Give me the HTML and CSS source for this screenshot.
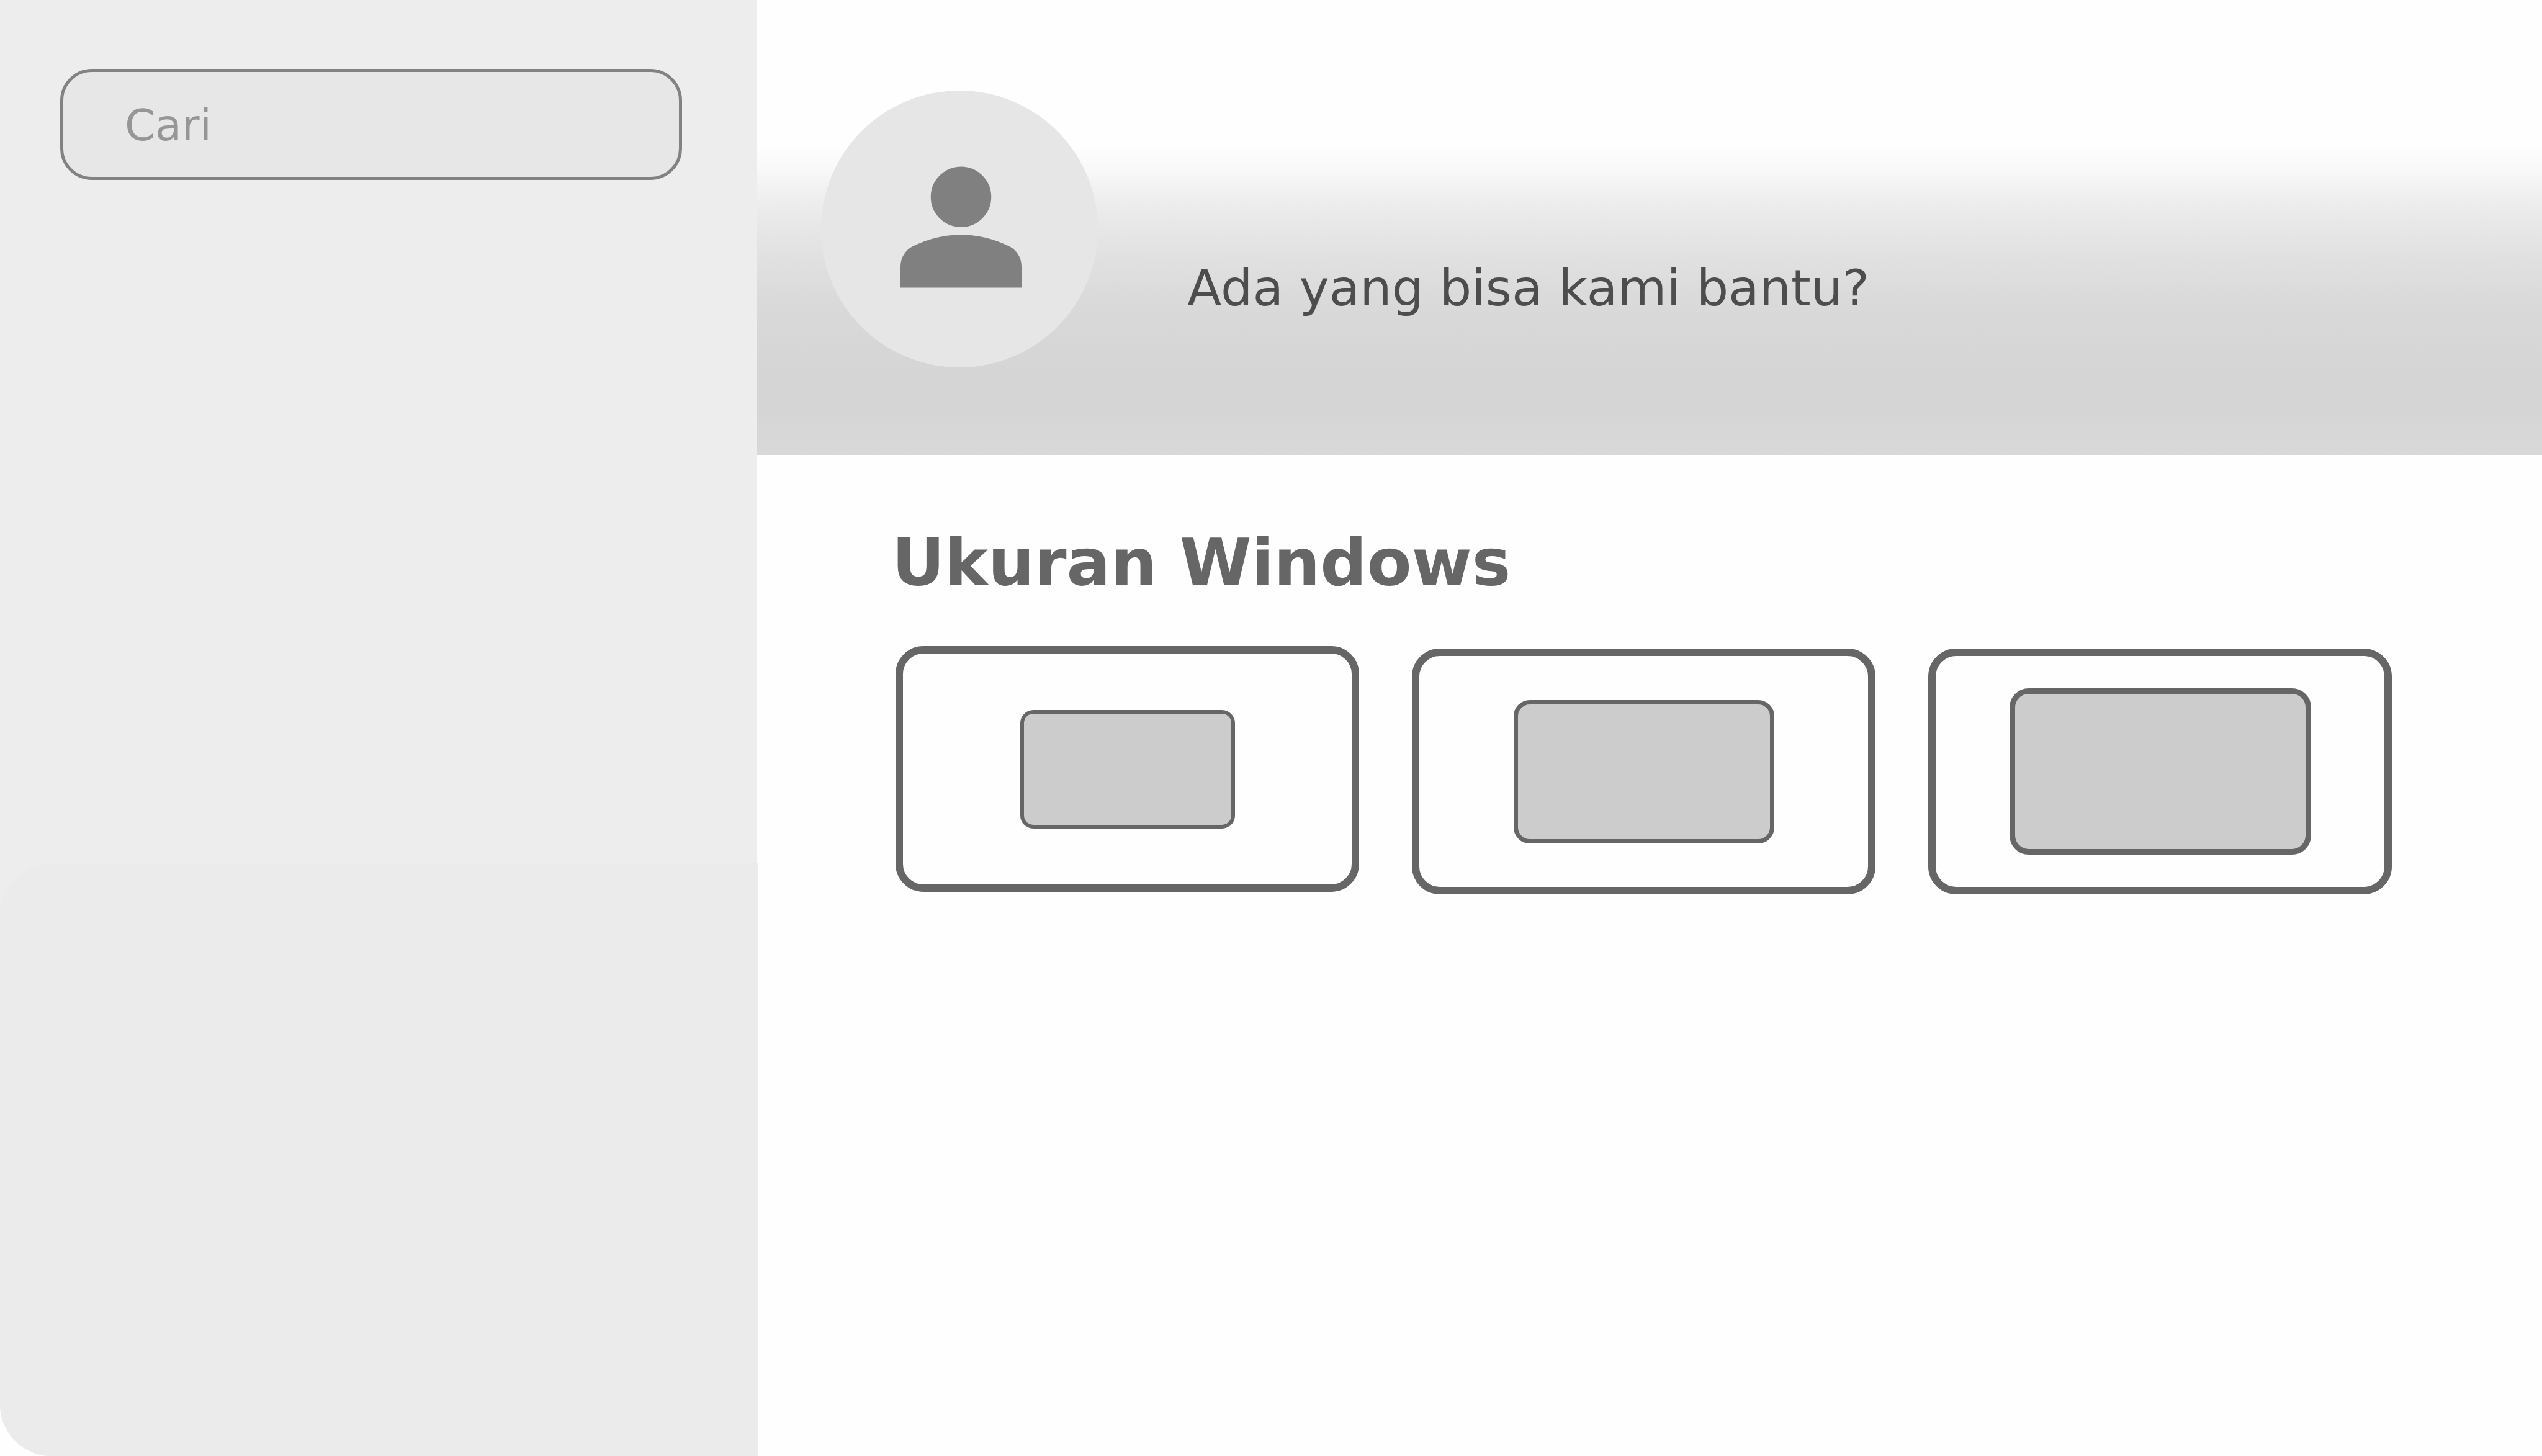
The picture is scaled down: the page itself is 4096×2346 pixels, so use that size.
FILE: index.html
```html
<!DOCTYPE html>
<html lang="id">
<head>
  <meta charset="utf-8">
  <meta name="viewport" content="width=device-width, initial-scale=1">
  <title>Ukuran Windows</title>
  <link rel="stylesheet" href="styles.css">
</head>
<body>
  <div class="app">
    <aside class="sidebar">
      <form class="sidebar-top" role="search">
        <input class="search" type="search" placeholder="Cari" aria-label="Cari">
      </form>
      <div class="sidebar-panel"></div>
    </aside>

    <main class="main">
      <header class="hero">
        <svg class="avatar" viewBox="0 0 446 446" aria-hidden="true">
          <circle class="avatar-disc" cx="223" cy="223" r="223"/>
          <g class="avatar-person" transform="translate(79.25 73.75) scale(12.1875)">
            <path d="M12 12q-1.65 0-2.825-1.175T8 8q0-1.65 1.175-2.825T12 4q1.65 0 2.825 1.175T16 8q0 1.65-1.175 2.825T12 12z"/>
            <path d="M4 20v-2.8q0-.85.438-1.563T5.6 14.55q1.55-.775 3.15-1.163T12 13q1.65 0 3.25.388t3.15 1.162q.725.375 1.163 1.088T20 17.2V20z"/>
          </g>
        </svg>
        <p class="greeting">Ada yang bisa kami bantu?</p>
      </header>

      <section class="content">
        <h1 class="title">Ukuran Windows</h1>
        <div class="sizes">
          <button class="size-card size-card-first" type="button" aria-label="Kecil">
            <span class="window window-small"></span>
          </button>
          <button class="size-card" type="button" aria-label="Sedang">
            <span class="window window-medium"></span>
          </button>
          <button class="size-card" type="button" aria-label="Besar">
            <span class="window window-large"></span>
          </button>
        </div>
      </section>
    </main>
  </div>
</body>
</html>
```
FILE: styles.css
```css
*,
*::before,
*::after {
  box-sizing: border-box;
}

body {
  margin: 0;
  background: #fefefe;
  font-family: Verdana, "DejaVu Sans", sans-serif;
}

.app {
  display: grid;
  grid-template-columns: 1219px 1fr;
  min-height: 100vh;
}

/* Sidebar */
.sidebar {
  display: grid;
  grid-template-rows: 1390fr 956fr;
  background: #ededed;
  border-bottom-left-radius: 83px;
}

.sidebar-top {
  padding: 111px 120px 0 97px;
}

.search {
  display: block;
  width: 100%;
  height: 179px;
  margin: 0;
  padding: 2px 99px 0;
  border: 5px solid #828282;
  border-radius: 51px;
  background: #e7e7e7;
  color: #4d4d4d;
  font: inherit;
  font-size: 70px;
  appearance: none;
  outline: none;
}

.search::placeholder {
  color: #969696;
  opacity: 1;
}

.sidebar-panel {
  margin-right: -2px;
  border-radius: 83px 0 0 83px;
  background: #ebebeb;
}

/* Hero */
.hero {
  display: flex;
  align-items: flex-start;
  gap: 144px;
  padding: 146px 104px 141px;
  background: linear-gradient(
    #fefefe 32%,
    #f9f9f9 37%,
    #f2f2f2 41%,
    #eaeaea 47%,
    #e4e4e4 53%,
    #dfdfdf 59%,
    #dbdbdb 64%,
    #d8d8d8 70%,
    #d6d6d6 77%,
    #d5d5d5 83%,
    #d5d5d5 90%,
    #d8d8d8
  );
}

.avatar {
  flex: none;
  width: 446px;
  height: 446px;
}

.avatar-disc {
  fill: #e6e6e6;
}

.avatar-person {
  fill: #808080;
}

.greeting {
  margin: 0;
  padding-top: 270px;
  color: #4d4d4d;
  font-size: 81px;
  line-height: 96px;
}

/* Window sizes */
.content {
  padding: 114px 242px 114px 218px;
}

.title {
  margin: 0 0 74px;
  color: #666;
  font-size: 105px;
  font-weight: bold;
  line-height: 120px;
}

.sizes {
  display: grid;
  grid-template-columns: repeat(3, 1fr);
  grid-template-rows: 400px;
  align-items: end;
  gap: 85px;
  padding-left: 6px;
}

.size-card {
  display: flex;
  align-items: center;
  justify-content: center;
  height: 396px;
  padding: 0;
  border: 12px solid #666;
  border-radius: 45px;
  background: #fefefe;
}

.size-card-first {
  align-self: start;
}

.window {
  border: 6px solid #666;
  background: #ccc;
}

.window-small {
  width: 346px;
  height: 191px;
  border-radius: 21px;
}

.window-medium {
  width: 420px;
  height: 231px;
  border-width: 7px;
  border-radius: 26px;
}

.window-large {
  width: 486px;
  height: 268px;
  border-width: 9px;
  border-radius: 31px;
}
```
